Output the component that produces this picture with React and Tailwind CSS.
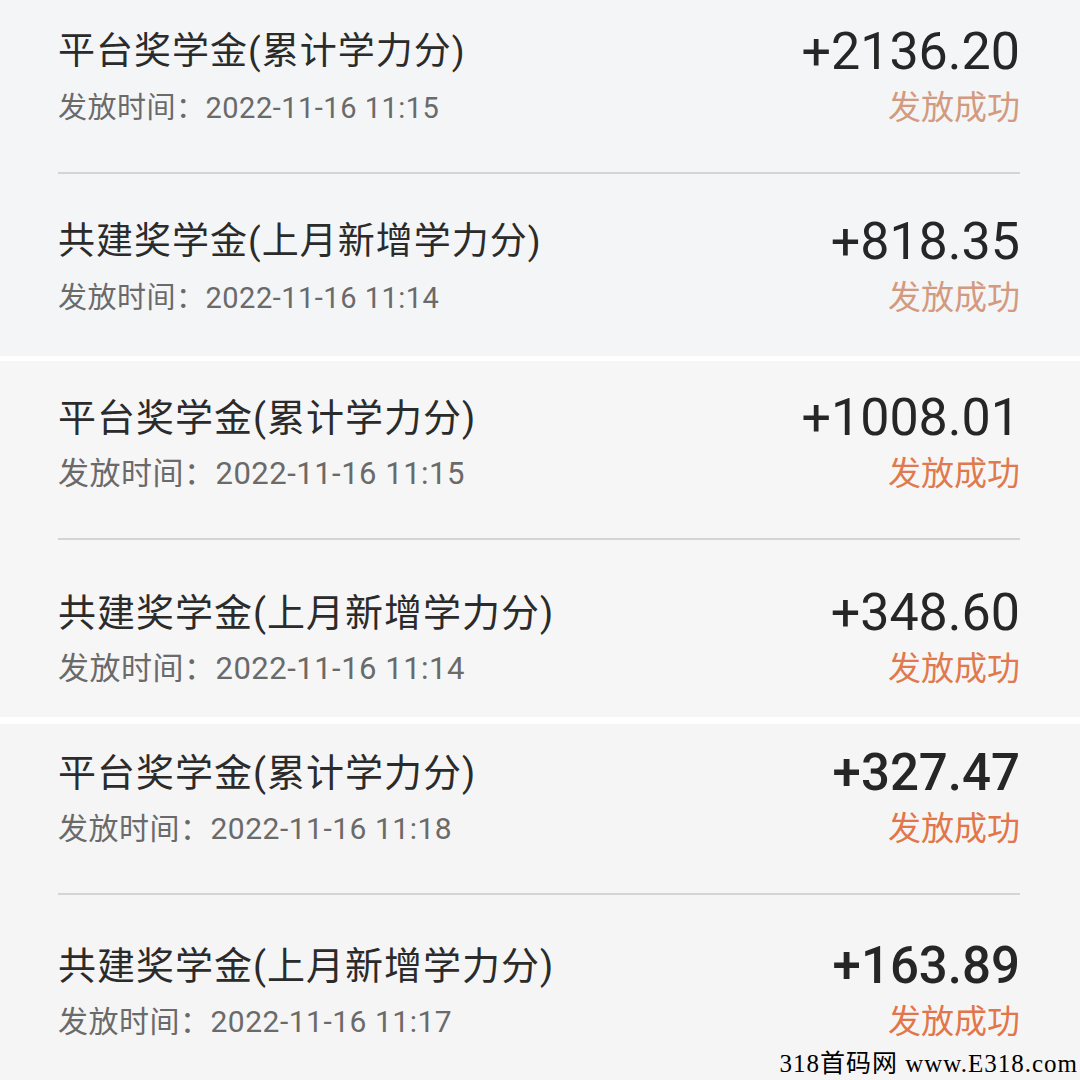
import React from 'react';

const panels = [
  {
    bg: 'bg-[#f3f5f7]',
    pad: 'pt-[24px]',
    before: 'mt-[36px]',
    after: 'mt-[40px]',
    title: 'text-[37px]',
    date: 'text-[29px]',
    amount: 'text-[52px] font-normal',
    status: 'text-[#d39a7f]',
    rows: [
      { name: '平台奖学金(累计学力分)', time: '2022-11-16 11:15', money: '+2136.20' },
      { name: '共建奖学金(上月新增学力分)', time: '2022-11-16 11:14', money: '+818.35' },
    ],
  },
  {
    bg: 'bg-[#f6f6f6]',
    pad: 'pt-[29px]',
    before: 'mt-[36px]',
    after: 'mt-[45px]',
    title: 'text-[38px]',
    date: 'text-[31px]',
    amount: 'text-[52px] font-normal',
    status: 'text-[#e07a4e]',
    rows: [
      { name: '平台奖学金(累计学力分)', time: '2022-11-16 11:15', money: '+1008.01' },
      { name: '共建奖学金(上月新增学力分)', time: '2022-11-16 11:14', money: '+348.60' },
    ],
  },
  {
    bg: 'bg-[#f5f5f5]',
    pad: 'pt-[21px]',
    before: 'mt-[36px]',
    after: 'mt-[43px]',
    title: 'text-[38px]',
    date: 'text-[30px]',
    amount: 'text-[51px] font-medium',
    status: 'text-[#e2764a]',
    rows: [
      { name: '平台奖学金(累计学力分)', time: '2022-11-16 11:18', money: '+327.47' },
      { name: '共建奖学金(上月新增学力分)', time: '2022-11-16 11:17', money: '+163.89' },
    ],
  },
];

const Row = ({ item, p }) => (
  <div className="flex justify-between">
    <div className="flex flex-col">
      <div className={`${p.title} leading-[56px] tracking-[1px] text-[#2b2b2b] whitespace-nowrap`}>{item.name}</div>
      <div className={`${p.date} leading-[56px] tracking-[0.5px] text-[#6a6a6a] whitespace-nowrap`}>
        发放时间：{item.time}
      </div>
    </div>
    <div className="flex flex-col items-end">
      <div className={`leading-[56px] text-[#262626] ${p.amount}`}>{item.money}</div>
      <div className={`text-[33px] leading-[56px] ${p.status}`}>发放成功</div>
    </div>
  </div>
);

const Panel = ({ p }) => (
  <div className={`h-[356px] overflow-hidden pl-[58px] pr-[60px] ${p.bg} ${p.pad}`}>
    <Row item={p.rows[0]} p={p} />
    <div className={`h-[2px] bg-[#d2d4d7] ${p.before}`} />
    <div className={p.after}>
      <Row item={p.rows[1]} p={p} />
    </div>
  </div>
);

export default function App() {
  return (
    <div
      className="relative w-[1080px] h-[1080px] overflow-hidden bg-white"
      style={{ fontFamily: 'Roboto, "Noto Sans CJK SC", sans-serif' }}
    >
      <Panel p={panels[0]} />
      <div className="h-[5px] bg-white" />
      <Panel p={panels[1]} />
      <div className="h-[7px] bg-white" />
      <Panel p={panels[2]} />
      {/* 水印 */}
      <div
        className="absolute right-[2px] bottom-[4px] text-[25px] leading-none tracking-[1px] text-black whitespace-nowrap"
        style={{ fontFamily: '"Liberation Serif", "Noto Sans CJK SC", serif' }}
      >
        318首码网 www.E318.com
      </div>
    </div>
  );
}
